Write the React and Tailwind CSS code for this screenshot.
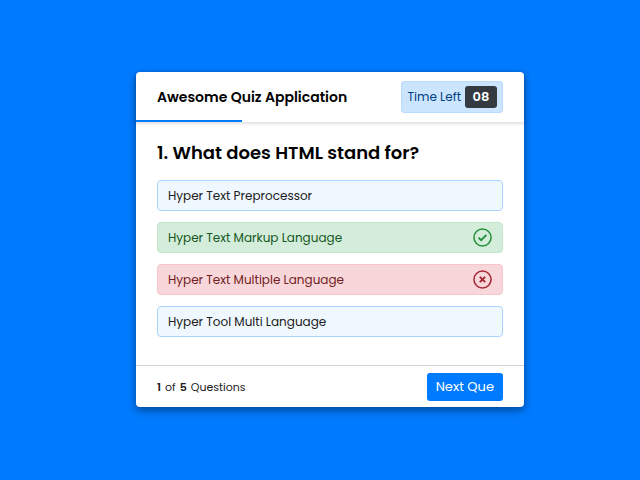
import React, { useState } from 'react';
import clsx from 'clsx';

const question = {
  numb: 1,
  text: 'What does HTML stand for?',
  options: [
    { label: 'Hyper Text Preprocessor' },
    { label: 'Hyper Text Markup Language', status: 'correct' },
    { label: 'Hyper Text Multiple Language', status: 'incorrect' },
    { label: 'Hyper Tool Multi Language' },
  ],
};

const TOTAL_QUESTIONS = 5;

// Round tick / cross shown at the end of an answered option
const StatusIcon = ({ status }) => (
  <svg viewBox="0 0 20 20" fill="none" stroke="currentColor" className="size-[19px] shrink-0" aria-hidden="true">
    <circle cx="10" cy="10" r="9" strokeWidth="1.6" />
    {status === 'correct' ? (
      <path d="M5.8 10.2l2.8 2.7 5.5-5.6" strokeWidth="2" />
    ) : (
      <path d="M7.2 7.2l5.6 5.6M12.8 7.2l-5.6 5.6" strokeWidth="2.1" />
    )}
  </svg>
);

const Option = ({ label, status }) => (
  <button
    type="button"
    className={clsx(
      'flex h-[31px] w-full items-center justify-between rounded border px-2.5 text-left text-[12px]',
      !status && 'border-[#a9d4ff] bg-[#f0f8ff] text-[#202020]',
      status === 'correct' && 'border-[#c3e6cb] bg-[#d4edda] text-[#155724]',
      status === 'incorrect' && 'border-[#f5c6cb] bg-[#f8d7da] text-[#721c24]'
    )}
  >
    <span>{label}</span>
    {status && (
      <span className={status === 'correct' ? 'text-[#23903c]' : 'text-[#a42834]'}>
        <StatusIcon status={status} />
      </span>
    )}
  </button>
);

const App = () => {
  const [timeLeft] = useState(8);
  const progress = 27.3;

  return (
    <div className="flex min-h-screen items-center justify-center bg-[#007bff] pb-px pl-5 font-['Poppins','Inter',sans-serif] text-black">
      <main className="w-full max-w-[388px] rounded bg-white shadow-[0_3px_6px_rgba(0,0,0,0.25),0_4px_12px_rgba(0,0,0,0.2)]">
        {/* Header */}
        <header className="relative flex items-center justify-between rounded-t px-[21px] py-[9px] shadow-[0_1px_3px_1px_rgba(0,0,0,0.12)]">
          <h1 className="text-[14px] font-semibold">Awesome Quiz Application</h1>
          <div
            role="timer"
            className="flex h-8 items-center gap-1 rounded-[3px] border border-[#b8daff] bg-[#cce5ff] pr-[5px] pl-1.5 text-[#004085]"
          >
            <span className="text-[12px]">Time Left</span>
            <span className="flex h-[22px] w-8 items-center justify-center rounded-[3px] bg-[#343a40] text-[13px] font-semibold text-white">
              {String(timeLeft).padStart(2, '0')}
            </span>
          </div>
          {/* Time line */}
          <div className="absolute bottom-0 left-0 h-0.5 bg-[#007bff]" style={{ width: `${progress}%` }} />
        </header>

        {/* Question and options */}
        <section className="px-[21px] pt-[17px] pb-7">
          <h2 className="text-[18px] leading-7 font-semibold">
            {question.numb}. {question.text}
          </h2>
          <div className="mt-[13px] flex flex-col gap-[11px]">
            {question.options.map((option) => (
              <Option key={option.label} {...option} />
            ))}
          </div>
        </section>

        {/* Footer */}
        <footer className="flex items-center justify-between border-t border-[#d3d3d3] px-[21px] pt-[7px] pb-1.5">
          <p className="flex gap-1 text-[11px] text-[#202020]">
            <span className="font-semibold">{question.numb}</span>
            <span>of</span>
            <span className="font-semibold">{TOTAL_QUESTIONS}</span>
            <span>Questions</span>
          </p>
          <button type="button" className="h-7 rounded-[3px] bg-[#007bff] px-[9px] text-[13px] text-white">
            Next Que
          </button>
        </footer>
      </main>
    </div>
  );
};

export default App;
